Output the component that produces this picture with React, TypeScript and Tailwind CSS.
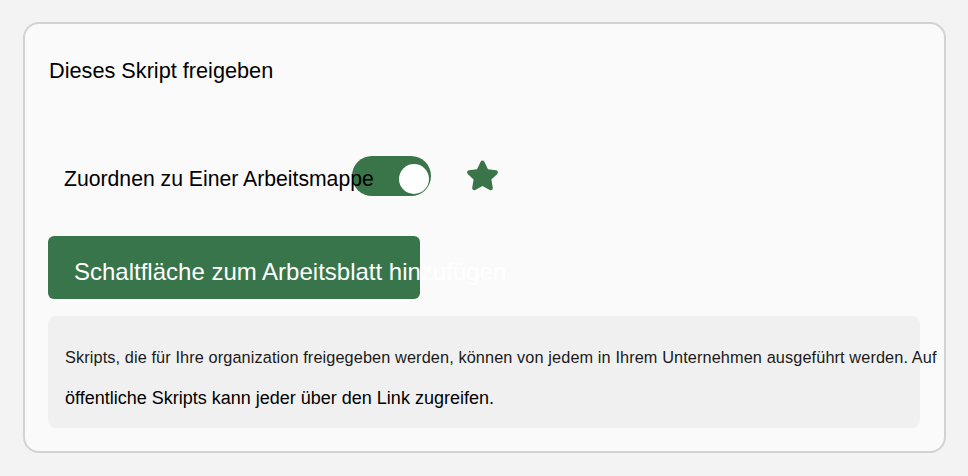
import React from "react";

function Star() {
  return (
    <svg width="37" height="37" viewBox="0 0 24 24" className="block" aria-hidden="true">
      <path
        fill="#3a7549"
        d="M10.788 3.103c.495-1.004 1.926-1.004 2.421 0l2.358 4.777 5.273.766c1.107.161 1.549 1.522.748 2.303l-3.816 3.72.901 5.25c.19 1.103-.968 1.944-1.959 1.424l-4.716-2.48-4.715 2.480c-.99.52-2.148-.32-1.96-1.424l.901-5.25-3.815-3.72c-.801-.78-.359-2.142.748-2.303L8.43 7.88l2.358-4.777Z"
      />
    </svg>
  );
}

export default function App() {
  return (
    <div
      className="w-[968px] h-[476px] bg-[#f3f3f3] pl-[23px] pt-[22px]"
      style={{ fontFamily: '"Liberation Sans", Arial, sans-serif' }}
    >
      <div className="w-[923px] h-[431px] box-border rounded-[16px] border-2 border-[#d2d2d2] bg-[#fafafa] px-[23px] pt-[33px]">
        <div className="ml-px text-[21.7px] leading-[28px] text-black">Dieses Skript freigeben</div>

        <div className="mt-[71px] flex items-center h-[40px]">
          <div className="relative z-10 w-[304px] shrink-0 pl-[16px] pt-[6px] text-[21.2px] leading-[28px] text-black whitespace-nowrap">
            Zuordnen zu Einer Arbeitsmappe
          </div>
          <div className="relative w-[79px] h-[40px] shrink-0 rounded-full bg-[#3a7549]">
            <div className="absolute right-[2px] bottom-[2px] w-[30px] h-[30px] rounded-full bg-white" />
          </div>
          <div className="ml-[33px] mt-[-2px]">
            <Star />
          </div>
        </div>

        <div className="mt-[40px] w-[372px] h-[63px] rounded-[6px] bg-[#38754a] flex items-center pt-[8px] pl-[26px] text-white text-[24px] leading-[28px] whitespace-nowrap">
          Schaltfläche zum Arbeitsblatt hinzufügen
        </div>

        <div className="mt-[17px] w-[872px] h-[112px] rounded-[8px] bg-[#f0f0f0] pt-[21px] pl-[17px] text-black whitespace-nowrap">
          <div className="text-[16.3px] tracking-[0.11px] leading-[41px] text-[#1a1a1a]">
            Skripts, die für Ihre organization freigegeben werden, können von jedem in Ihrem Unternehmen ausgeführt werden. Auf
          </div>
          <div className="text-[18px] leading-[41px]">
            öffentliche Skripts kann jeder über den Link zugreifen.
          </div>
        </div>
      </div>
    </div>
  );
}
